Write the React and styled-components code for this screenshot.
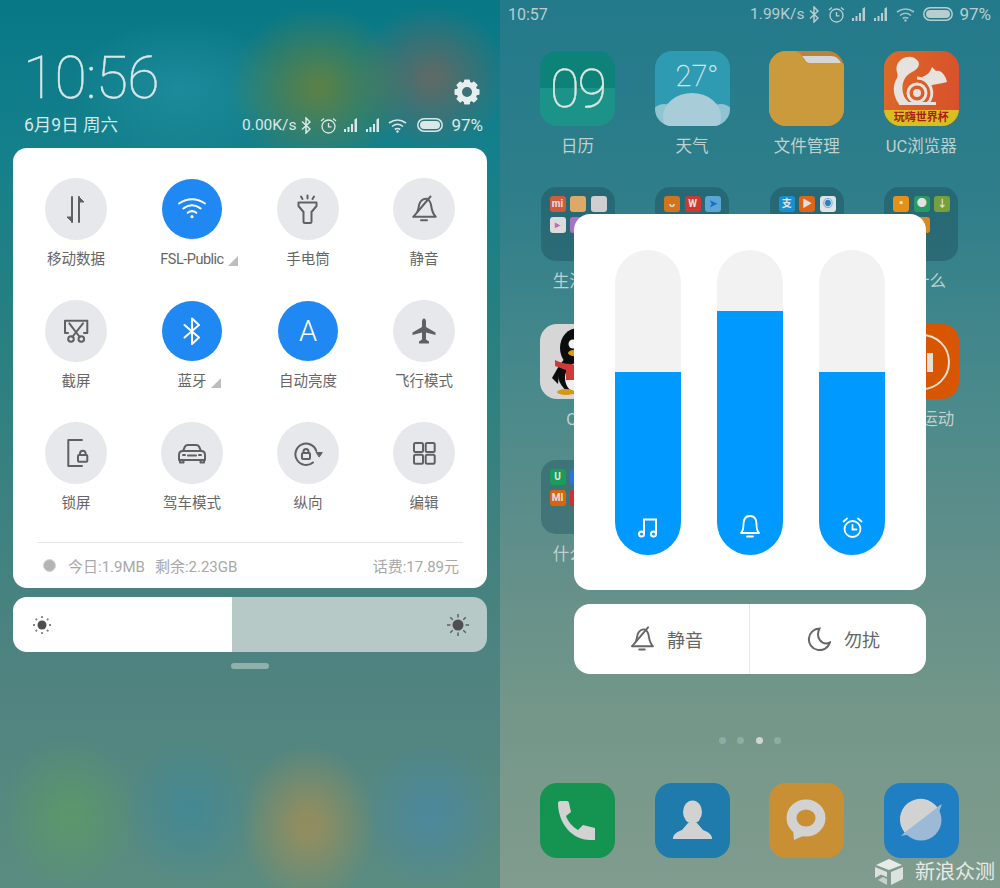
import React from "react";
import styled, { createGlobalStyle } from "styled-components";

const Global = createGlobalStyle`
  html, body { margin: 0; padding: 0; }
  body { font-family: Roboto, "Noto Sans CJK SC", sans-serif; }
`;

const Page = styled.div`
  width: 1000px;
  height: 888px;
  display: flex;
  overflow: hidden;
`;

/* left phone: control centre */
const ControlScreen = styled.div`
  width: 500px;
  height: 888px;
  padding: 0 13px;
  box-sizing: border-box;
  background:
    radial-gradient(ellipse 90px 80px at 318px 88px, rgba(115, 130, 50, 0.72) 10%, rgba(115, 130, 50, 0)),
    radial-gradient(ellipse 78px 72px at 432px 78px, rgba(120, 100, 90, 0.72) 10%, rgba(120, 100, 90, 0)),
    radial-gradient(ellipse 110px 70px at 180px 90px, rgba(40, 150, 170, 0.55), rgba(40, 150, 170, 0)),
    radial-gradient(ellipse 70px 78px at 70px 815px, rgba(95, 165, 85, 0.45) 15%, rgba(95, 165, 85, 0)),
    radial-gradient(ellipse 68px 78px at 190px 812px, rgba(50, 135, 165, 0.45) 15%, rgba(50, 135, 165, 0)),
    radial-gradient(ellipse 68px 80px at 308px 825px, rgba(190, 145, 70, 0.55) 15%, rgba(190, 145, 70, 0)),
    radial-gradient(ellipse 68px 78px at 430px 815px, rgba(65, 135, 180, 0.48) 15%, rgba(65, 135, 180, 0)),
    linear-gradient(180deg, #087886 0, #14808c 150px, #26807f 320px, #4f8380 670px, #5b8c80 888px);
`;

const Header = styled.header`
  height: 148px;
  box-sizing: border-box;
  padding: 0 4px 12px 11px;
  display: flex;
  flex-direction: column;
  justify-content: flex-end;
  color: #d8e8e8;
`;

const HeaderTop = styled.div`
  display: flex;
  justify-content: space-between;
  align-items: flex-end;
`;

const HeaderBottom = styled.div`
  display: flex;
  justify-content: space-between;
  align-items: center;
  margin-top: 6px;
`;

const Clock = styled.div`
  font-size: 59px;
  line-height: 60px;
  font-weight: 100;
  letter-spacing: -0.8px;
  margin-left: -1px;
  -webkit-text-stroke: 0.45px #d8e8e8;
`;

const DateText = styled.div`
  font-size: 17.5px;
  line-height: 22px;
`;

const Gear = styled.svg`
  display: block;
  width: 26px;
  height: 26px;
  margin: 0 3px 3px 0;
`;

const Status = styled.div`
  display: flex;
  align-items: center;
  gap: 7px;
  font-size: 15.5px;
  line-height: 20px;
  color: ${(p) => p.$color};
`;

const Percent = styled.span`
  font-size: 17px;
  margin-left: ${(p) => p.$ml}px;
`;

const StatusGlyph = styled.svg`
  display: block;
  flex: none;
  margin-left: ${(p) => p.$ml || 0}px;
`;

const Card = styled.section`
  height: 440px;
  box-sizing: border-box;
  padding-top: 30px;
  background: #fff;
  border-radius: 14px;
`;

const Tiles = styled.div`
  display: grid;
  grid-template-columns: repeat(4, 116px);
  grid-template-rows: 122px 122px 120px;
  padding: 0 5px;
`;

const Tile = styled.div`
  display: flex;
  flex-direction: column;
  align-items: center;
`;

const Disc = styled.div`
  width: ${(p) => (p.$on ? 60 : 62)}px;
  height: ${(p) => (p.$on ? 60 : 62)}px;
  margin: ${(p) => (p.$on ? 1 : 0)}px 0;
  border-radius: 50%;
  display: flex;
  align-items: center;
  justify-content: center;
  background: ${(p) => (p.$on ? "#1f88f2" : "#e7e8ec")};
  color: ${(p) => (p.$on ? "#fff" : "#5f6064")};
  font-size: 29px;
  font-weight: 300;
`;

const TileLabel = styled.div`
  position: relative;
  margin-top: 10.5px;
  font-size: 14.5px;
  line-height: 18px;
  color: #666;
  white-space: nowrap;
`;

const TileName = styled.span`
  font-size: 14.5px;
  letter-spacing: ${(p) => (p.$latin ? "-0.5px" : "0")};
`;

const Corner = styled.i`
  position: absolute;
  left: 100%;
  bottom: 3px;
  margin-left: 4px;
  width: 0;
  height: 0;
  border-left: 10px solid transparent;
  border-bottom: 10px solid #bdbdbd;
`;

const Footer = styled.footer`
  height: 46px;
  margin: 0 24px;
  padding: 0 4px 0 6px;
  border-top: 1px solid #e8e8e8;
  box-sizing: border-box;
  display: flex;
  align-items: center;
  font-size: 15px;
  color: #a8a8a8;
`;

const Meter = styled.span`
  width: 13px;
  height: 13px;
  border-radius: 50%;
  margin-right: 12px;
  background: #b4b4b4;
  border: 1px solid #d4d4d4;
  box-sizing: border-box;
`;

const FooterItem = styled.span`
  margin-right: 10px;
`;

const FooterEnd = styled.span`
  margin-left: auto;
`;

const Brightness = styled.div`
  height: 55px;
  margin-top: 9px;
  padding: 0 17px 0 19px;
  box-sizing: border-box;
  border-radius: 14px;
  display: flex;
  align-items: center;
  justify-content: space-between;
  background: linear-gradient(90deg, #fff ${(p) => p.$level}px, #b6c9c6 ${(p) => p.$level}px);
`;

const Handle = styled.div`
  width: 38px;
  height: 6px;
  margin: 11px auto 0;
  border-radius: 3px;
  background: #8fb0ab;
`;

/* right phone: home screen with volume panel */
const HomeScreen = styled.div`
  position: relative;
  width: 500px;
  height: 888px;
  box-sizing: border-box;
  padding-bottom: 30px;
  display: flex;
  flex-direction: column;
  background: linear-gradient(180deg, #237a8a 0, #2f7e8a 200px, #4a8a8b 400px, #628f8a 560px, #749789 720px, #809c8e 888px);
`;

const TopBar = styled.div`
  height: 28px;
  padding: 0 9px 0 8px;
  display: flex;
  align-items: center;
  justify-content: space-between;
  color: #b9cdd0;
  font-size: 16px;
`;

const AppGrid = styled.div`
  display: grid;
  grid-template-columns: repeat(4, 75px);
  grid-auto-rows: 136.4px;
  column-gap: 39.6px;
  padding: 23px 0 0 40px;
`;

const AppCell = styled.div`
  display: flex;
  flex-direction: column;
  align-items: center;
`;

const AppLabel = styled.div`
  margin-top: 10px;
  font-size: 16.5px;
  line-height: 22px;
  color: #bfd0ce;
  white-space: nowrap;
`;

const AppIcon = styled.div`
  position: relative;
  flex: none;
  width: 75px;
  height: 75px;
  border-radius: 17px;
  overflow: hidden;
  background: ${(p) => p.$bg};
  display: flex;
  align-items: center;
  justify-content: center;
`;

const AppArt = styled.svg`
  display: block;
  width: 75px;
  height: 75px;
`;

const CalendarDay = styled.div`
  font-size: 54px;
  font-weight: 100;
  letter-spacing: -2px;
  color: #dde6e3;
  -webkit-text-stroke: 0.5px #dde6e3;
`;

const WeatherBody = styled.div`
  position: absolute;
  top: 5px;
  left: 21px;
  font-size: 29px;
  line-height: 40px;
  font-weight: 100;
  color: #d7e5e8;
  -webkit-text-stroke: 0.35px #d7e5e8;
`;

const CupBand = styled.div`
  position: absolute;
  left: 0;
  right: 0;
  bottom: 0;
  height: 16px;
  background: #d6bf1f;
  color: #ad1c18;
  font-size: 11px;
  line-height: 16px;
  font-weight: 700;
  text-align: center;
  white-space: nowrap;
`;

const Folder = styled.div`
  width: 74px;
  height: 74px;
  box-sizing: border-box;
  padding: 9px;
  border-radius: 15px;
  background: rgba(28, 80, 90, ${(p) => p.$alpha});
  display: grid;
  grid-template-columns: repeat(3, 16px);
  grid-auto-rows: 16px;
  gap: 5px 4.5px;
`;

const Mini = styled.div`
  border-radius: 3px;
  background: ${(p) => p.$bg};
  color: ${(p) => p.$fg || "#e2e2e2"};
  font-size: 10px;
  line-height: 16px;
  font-weight: 700;
  text-align: center;
  overflow: hidden;
`;

const Dots = styled.div`
  margin-top: auto;
  margin-bottom: 39px;
  display: flex;
  justify-content: center;
  gap: 11.5px;
`;

const Dot = styled.span`
  width: 7px;
  height: 7px;
  border-radius: 50%;
  background: ${(p) => (p.$on ? "#cfd6d4" : "#8faba6")};
`;

const Dock = styled.div`
  display: grid;
  grid-template-columns: repeat(4, 75px);
  column-gap: 39.6px;
  padding-left: 40px;
`;

const VolumeOverlay = styled.div`
  position: absolute;
  top: 214px;
  left: 74px;
  width: 352px;
`;

const VolumePanel = styled.div`
  height: 376px;
  box-sizing: border-box;
  padding: 36px 41px;
  background: #fff;
  border-radius: 16px;
  display: flex;
  justify-content: space-between;
`;

const Track = styled.div`
  width: 66px;
  height: 305px;
  border-radius: 33px;
  overflow: hidden;
  background: #f2f2f2;
  display: flex;
  flex-direction: column;
  justify-content: flex-end;
`;

const Fill = styled.div`
  height: ${(p) => p.$level}px;
  box-sizing: border-box;
  padding-bottom: 17px;
  background: #0099ff;
  color: #fff;
  display: flex;
  flex-direction: column;
  justify-content: flex-end;
  align-items: center;
`;

const ModeBar = styled.div`
  height: 70px;
  margin-top: 14px;
  background: #fff;
  border-radius: 16px;
  display: flex;
  overflow: hidden;
`;

const ModeButton = styled.div`
  flex: 0 0 ${(p) => p.$width}px;
  box-sizing: border-box;
  padding-left: ${(p) => p.$pad}px;
  display: flex;
  align-items: center;
  gap: ${(p) => p.$gap}px;
  font-size: 18px;
  color: #666;
  & + & {
    border-left: 1px solid #e8e8e8;
  }
`;

const Watermark = styled.div`
  position: absolute;
  right: 5px;
  bottom: 2px;
  display: flex;
  align-items: center;
  gap: 12px;
  font-size: 20px;
  line-height: 28px;
  color: #e6eae8;
`;

const Glyph = ({ size = 32, w = 2, children }) => (
  <svg width={size} height={size} viewBox="0 0 32 32" fill="none" stroke="currentColor" strokeWidth={w} strokeLinecap="round" strokeLinejoin="round">
    {children}
  </svg>
);

const DataIcon = () => (
  <Glyph>
    <path d="M12 4v25M19 4v25" />
    <path d="M12 29l-5-5h5zM19 4l5 5h-5z" fill="currentColor" strokeWidth="1" />
  </Glyph>
);
const WifiIcon = () => (
  <Glyph>
    <path d="M3 10.5Q16 2 29 10.5M7.3 15.5Q16 9 24.7 15.5M11.7 19.8Q16 16.5 20.3 19.8" />
    <circle cx="16" cy="23.7" r="1.6" fill="currentColor" stroke="none" />
  </Glyph>
);
const TorchIcon = () => (
  <Glyph>
    <path d="M6.5 9.5H24.5V13L19.5 19V28.5C19.5 29.5 19 30 18 30H13C12 30 11.5 29.5 11.5 28.5V19L6.5 13Z" />
    <path d="M15.5 2.5v3M9 3.5l1.5 2.5M22 3.5l-1.5 2.5" />
  </Glyph>
);
const BellOffIcon = ({ size }) => (
  <Glyph size={size}>
    <path d="M5.5 23.7L22.5 3.5" />
    <path d="M5.5 23.7H27.7C25 21 24 18 23.3 13.5C22.8 10 21.5 7.5 20 6.5" />
    <path d="M9.5 18.5C11 15 10.5 12 12 9.5C13.5 7 16 5.5 19 5.7" />
    <path d="M13 27.2h6" />
  </Glyph>
);
const CutIcon = () => (
  <Glyph>
    <path d="M8 18H5V5.7H27.3V18H24" />
    <path d="M9.3 8.3L19.7 22M23 8.3L12.3 22" />
    <circle cx="11" cy="24" r="2.8" />
    <circle cx="21.3" cy="24" r="2.8" />
  </Glyph>
);
const BluetoothIcon = () => (
  <Glyph>
    <path d="M8.5 10L23 22.5L16 29V3.5L23 10L8.5 22.5" />
  </Glyph>
);
const PlaneIcon = () => (
  <Glyph>
    <path
      d="M16 3.5C17.2 3.5 18 5 18 7V12L27.5 17.5V20L18 17.5V24.5L21 26.5V28.5H11V26.5L14 24.5V17.5L4.5 20V17.5L14 12V7C14 5 14.8 3.5 16 3.5Z"
      fill="currentColor"
      stroke="none"
    />
  </Glyph>
);
const LockPhoneIcon = () => (
  <Glyph>
    <path d="M22 3H8.3V29H22" />
    <rect x="18" y="18" width="9.3" height="6.7" rx="1" />
    <path d="M20 18v-1.5a2.8 2.8 0 0 1 5.6 0V18" />
  </Glyph>
);
const CarIcon = () => (
  <Glyph>
    <path d="M7 14L9 9.5C9.5 8.5 10.5 8 12 8H20C21.5 8 22.5 8.5 23 9.5L25 14" />
    <path d="M3 23V18C3 15 5 14 7 14H25C27 14 29 15 29 18V23H3Z" />
    <path d="M4 23v2.5h3.5V23M24.5 23v2.5H28V23M7 18h2M23 18h2M12 18.5h8" />
  </Glyph>
);
const RotateIcon = () => (
  <Glyph>
    <path d="M21 25.5A10.7 10.7 0 1 1 24.3 14" />
    <path d="M24.5 15.5h5.8l-2.9 4.3z" fill="currentColor" strokeWidth="1" />
    <rect x="10" y="16" width="8" height="6" rx="1" />
    <path d="M11.5 16v-1.5a2.5 2.5 0 0 1 5 0V16" />
  </Glyph>
);
const EditIcon = () => (
  <Glyph>
    <rect x="6" y="6" width="9" height="9" rx="1.5" />
    <rect x="17.7" y="6" width="9" height="9" rx="1.5" />
    <rect x="6" y="17.7" width="9" height="9" rx="1.5" />
    <rect x="17.7" y="17.7" width="9" height="9" rx="1.5" />
  </Glyph>
);

const tiles = [
  { name: "移动数据", icon: <DataIcon /> },
  { name: "FSL-Public", icon: <WifiIcon />, on: true, more: true, latin: true },
  { name: "手电筒", icon: <TorchIcon /> },
  { name: "静音", icon: <BellOffIcon /> },
  { name: "截屏", icon: <CutIcon /> },
  { name: "蓝牙", icon: <BluetoothIcon />, on: true, more: true },
  { name: "自动亮度", icon: "A", on: true },
  { name: "飞行模式", icon: <PlaneIcon /> },
  { name: "锁屏", icon: <LockPhoneIcon /> },
  { name: "驾车模式", icon: <CarIcon /> },
  { name: "纵向", icon: <RotateIcon /> },
  { name: "编辑", icon: <EditIcon /> },
];

const SignalGlyph = () => (
  <StatusGlyph width="15" height="14" viewBox="0 0 15 14" fill="currentColor">
    <path d="M0 11h2v3H0zM3.5 9h2v5h-2zM7 6h2v8H7zM10.5 1.5L13 0v14h-2.5z" />
  </StatusGlyph>
);

const StatusIcons = ({ battery, batteryGap, dimWifi }) => (
  <>
    <StatusGlyph $ml={-2} width="10" height="17" viewBox="0 0 10 17" fill="none" stroke="currentColor" strokeWidth="1.5">
      <path d="M1 4.5L9 12L5 16V1L9 5L1 12.5" />
    </StatusGlyph>
    <StatusGlyph $ml={2} width="17" height="17" viewBox="0 0 17 17" fill="none" stroke="currentColor" strokeWidth="1.3">
      <circle cx="8.5" cy="9.5" r="6.5" />
      <path d="M8.5 6v3.8h3M1 4L4 1.5M16 4L13 1.5" />
    </StatusGlyph>
    <SignalGlyph />
    <SignalGlyph />
    <StatusGlyph width="19" height="15" viewBox="0 0 19 15" fill="none" stroke="currentColor" strokeWidth="1.6" opacity={dimWifi ? 0.85 : 1}>
      <path d="M1 5Q9.5 -1 18 5M4 8.5Q9.5 4 15 8.5M6.8 11.5Q9.5 9.5 12.2 11.5" />
      <circle cx="9.5" cy="13.5" r="1.2" fill="currentColor" stroke="none" />
    </StatusGlyph>
    <StatusGlyph $ml={batteryGap} width={battery} height="14" viewBox={`0 0 ${battery} 14`}>
      <rect x="0.8" y="0.8" width={battery - 1.6} height="12.4" rx="6.2" fill="none" stroke="currentColor" strokeWidth="1.5" />
      <rect x="3" y="3" width={battery - 6} height="8" rx="4" fill="currentColor" />
    </StatusGlyph>
  </>
);

const GearIcon = () => (
  <Gear viewBox="0 0 26 26" fill="#e6eeee">
    {[0, 45, 90, 135, 180, 225, 270, 315].map((a) => (
      <rect key={a} x="10" y="0.5" width="6" height="6" rx="1" transform={`rotate(${a} 13 13)`} />
    ))}
    <circle cx="13" cy="13" r="7.7" fill="none" stroke="#e6eeee" strokeWidth="5.4" />
  </Gear>
);

const SunIcon = ({ size, core, dotted }) => (
  <svg width={size} height={size} viewBox={`0 0 ${size} ${size}`} fill="#4d4f50" stroke="#4d4f50">
    <circle cx={size / 2} cy={size / 2} r={core} stroke="none" />
    {[0, 45, 90, 135, 180, 225, 270, 315].map((a) => (
      <path
        key={a}
        d={`M${size / 2} 1 v${dotted ? 2 : 3.5}`}
        strokeWidth={dotted ? 1.8 : 1.5}
        opacity={dotted ? 0.7 : 0.85}
        transform={`rotate(${a} ${size / 2} ${size / 2})`}
      />
    ))}
  </svg>
);

const FolderArt = () => (
  <AppArt viewBox="0 0 75 75">
    <path d="M33 5H62C67 5 70 8 72 12H41C38 12 37 11 36 9Z" fill="#d6d6d6" />
    <path d="M0 75V14C0 6 6 0 14 0H24C28 0 30 1 33 5L37 11C38 12 39 12 41 12H75V75Z" fill="#cb9a3c" />
  </AppArt>
);

const WeatherArt = () => (
  <AppArt viewBox="0 0 75 75">
    <circle cx="9" cy="66" r="13" fill="#8fc4d2" />
    <circle cx="66" cy="66" r="13" fill="#8fc4d2" />
    <ellipse cx="37" cy="66" rx="29" ry="24" fill="#a9cdd8" />
  </AppArt>
);

const SquirrelArt = () => (
  <AppArt viewBox="0 0 75 75" fill="#e6e2de">
    <path d="M13 14C16 6 28 2 34 10C37 15 32 19 28 21C20 25 17 33 19 42C20 47 23 50 27 53H15C9 45 8 35 13 27C15 23 11 20 13 14Z" />
    <path d="M38 26C43 24 46 22 48 16L52 20C57 18 62 25 63 31C56 33 50 33 46 35C44 31 41 28 38 26Z" />
    <circle cx="33" cy="42" r="4" />
    <circle cx="33" cy="42" r="9" fill="none" stroke="#e6e2de" strokeWidth="3" />
    <path d="M33 27A15 15 0 0 1 43 53" fill="none" stroke="#e6e2de" strokeWidth="3" />
    <path d="M15 51H52V54H15Z" />
  </AppArt>
);

const PenguinArt = () => (
  <AppArt viewBox="0 0 75 75">
    <ellipse cx="38" cy="50" rx="20" ry="20" fill="#0c0c0c" />
    <ellipse cx="38" cy="24" rx="18" ry="20" fill="#0c0c0c" />
    <path d="M12 54L20 40L18 60Z" fill="#0c0c0c" />
    <ellipse cx="40" cy="54" rx="15" ry="16" fill="#efefef" />
    <path d="M15 36C26 42 48 42 60 36L60 44L36 46L36 56L26 56L26 46L15 42Z" fill="#cc3b38" />
    <circle cx="33" cy="20" r="4.5" fill="#f2f2f2" />
    <ellipse cx="37" cy="29" rx="9" ry="3.5" fill="#e29a16" />
    <ellipse cx="26" cy="68" rx="9" ry="3" fill="#d9960f" />
  </AppArt>
);

const SportArt = () => (
  <AppArt viewBox="0 0 75 75" fill="none">
    <circle cx="38" cy="38" r="27" stroke="#eadfd6" strokeWidth="2" />
    <path d="M46 29v19" stroke="#eadfd6" strokeWidth="6" />
  </AppArt>
);

const HandsetArt = () => (
  <AppArt viewBox="0 0 75 75">
    <path d="M18 20C18 18 20 18 22 18H27C28 18 29 19 29 20L31 29L26 33C28 39 33 44 38 47L43 42L55 45V57H50C32 57 18 40 18 20Z" fill="#d2d2d2" />
  </AppArt>
);

const ContactArt = () => (
  <AppArt viewBox="0 0 75 75" fill="#d2d2d2">
    <ellipse cx="37.5" cy="29" rx="9.5" ry="11.5" />
    <path d="M18 56C18 52 20 50 27 47L33 40H42L48 47C55 50 57 52 57 56Z" />
  </AppArt>
);

const BubbleArt = () => (
  <AppArt viewBox="0 0 75 75" fill="#d2d2d2">
    <ellipse cx="37" cy="35" rx="14.5" ry="13.5" fill="none" stroke="#d2d2d2" strokeWidth="10" />
    <path d="M24 46L25 57L36 52Z" />
  </AppArt>
);

const PlanetArt = () => (
  <AppArt viewBox="0 0 75 75">
    <path d="M53 24L58 21L55 29ZM21 49L17 53L27 51Z" fill="#9cbad6" />
    <circle cx="37" cy="37" r="20.5" fill="#9cbad6" />
    <path d="M53.3 24.6A20.5 20.5 0 1 0 20.7 49.4Z" fill="#d2d2d2" />
  </AppArt>
);

const MusicIcon = () => (
  <svg width="20" height="20" viewBox="0 0 20 20" fill="none" stroke="currentColor" strokeWidth="2">
    <circle cx="3.5" cy="16" r="2.5" />
    <circle cx="15.5" cy="16" r="2.5" />
    <path d="M6 16V1.5H18V16" />
  </svg>
);
const BellIcon = () => (
  <svg width="20" height="23" viewBox="0 0 20 23" fill="none" stroke="currentColor" strokeWidth="1.8" strokeLinejoin="round" strokeLinecap="round">
    <path d="M1 18C3 16 3.5 14 3.5 9C3.5 4 6 1 10 1C14 1 16.5 4 16.5 9C16.5 14 17 16 19 18Z" />
    <path d="M7 21.5h6" />
  </svg>
);
const AlarmIcon = () => (
  <svg width="21" height="21" viewBox="0 0 21 21" fill="none" stroke="currentColor" strokeWidth="1.8" strokeLinecap="round">
    <circle cx="10.5" cy="12" r="8" />
    <path d="M10.5 8v4.5h4M1.5 4.5L5 1.5M19.5 4.5L16 1.5" />
  </svg>
);
const MoonIcon = () => (
  <svg width="24" height="24" viewBox="0 0 24 24" fill="none" stroke="#666" strokeWidth="2">
    <path d="M12.5 1.5A10.8 10.8 0 1 0 23 15.5C15 19 8 11 12.5 1.5Z" />
  </svg>
);

const Cube = () => (
  <svg width="28" height="27" viewBox="0 0 28 27" fill="#e6eae8">
    <path d="M14 0L27 6L14 11L1 6Z" />
    <path d="M0 8L12 13V18L6 15.5L0 19Z" opacity="0.9" />
    <path d="M28 8L16 13V26L28 20Z" opacity="0.9" />
    <path d="M3 21L8 18L12 20V26Z" opacity="0.7" />
  </svg>
);

const folderA = [
  ["#cf5a3c", "mi"],
  ["#dcaa66", ""],
  ["#cfcfcf", ""],
  ["#dcdcdc", "▸", "#c46ab0"],
  ["#a675c6", ""],
];
const folderB = [
  ["#d0741f", "ᴗ"],
  ["#c93a33", "W"],
  ["#5aa7d6", "➤", "#1c6fc7"],
];
const folderC = [
  ["#1a8fcf", "支"],
  ["#dd6418", "▶"],
  ["#dfe3e6", "◉", "#2c7fc4"],
];
const folderD = [
  ["#e2921a", "▪"],
  ["#2a9a62", "●"],
  ["#76a03c", "↓"],
  ["#3d8a8a", ""],
  ["#d78a24", ""],
];
const folderE = [
  ["#1a9c5a", "U"],
  ["#2a78d6", ""],
  ["#4a8a90", ""],
  ["#d8640f", "MI"],
  ["#d92c2c", ""],
];

const MiniGrid = ({ items, alpha = 0.45 }) => (
  <Folder $alpha={alpha}>
    {items.map(([bg, text, fg], i) => (
      <Mini key={i} $bg={bg} $fg={fg}>
        {text}
      </Mini>
    ))}
  </Folder>
);

const apps = [
  { name: "日历", icon: <AppIcon $bg="linear-gradient(180deg, #0d8278 50%, #1b9388 50%)"><CalendarDay>09</CalendarDay></AppIcon> },
  { name: "天气", icon: <AppIcon $bg="#2e9bb3"><WeatherArt /><WeatherBody>27°</WeatherBody></AppIcon> },
  { name: "文件管理", icon: <AppIcon $bg="#bd8238"><FolderArt /></AppIcon> },
  { name: "UC浏览器", icon: <AppIcon $bg="linear-gradient(100deg, #dc6a28, #d84f2b)"><SquirrelArt /><CupBand>玩嗨世界杯</CupBand></AppIcon> },
  { name: "生活类", icon: <MiniGrid items={folderA} /> },
  { name: "工具", icon: <MiniGrid items={folderB} /> },
  { name: "支付", icon: <MiniGrid items={folderC} /> },
  { name: "用什么", icon: <MiniGrid items={folderD} /> },
  { name: "QQ", icon: <AppIcon $bg="#d6d6d6"><PenguinArt /></AppIcon> },
  { name: "微信", icon: <AppIcon $bg="#2a9a62" /> },
  { name: "微博", icon: <AppIcon $bg="#d8640f" /> },
  { name: "小米运动", icon: <AppIcon $bg="#d85600"><SportArt /></AppIcon> },
  { name: "什么值", icon: <MiniGrid items={folderE} alpha={0.4} /> },
];

const dock = [
  { bg: "#149450", art: <HandsetArt /> },
  { bg: "#207bad", art: <ContactArt /> },
  { bg: "#c98f35", art: <BubbleArt /> },
  { bg: "#1f7fc2", art: <PlanetArt /> },
];

export default function App() {
  return (
    <Page>
      <Global />
      <ControlScreen>
        <Header>
          <HeaderTop>
            <Clock>10:56</Clock>
            <GearIcon />
          </HeaderTop>
          <HeaderBottom>
            <DateText>6月9日 周六</DateText>
            <Status $color="#dbe8e8">
              <span>0.00K/s</span>
              <StatusIcons battery={26} batteryGap={3} />
              <Percent $ml={1}>97%</Percent>
            </Status>
          </HeaderBottom>
        </Header>
        <Card>
          <Tiles>
            {tiles.map((t) => (
              <Tile key={t.name}>
                <Disc $on={t.on}>{t.icon}</Disc>
                <TileLabel>
                  <TileName $latin={t.latin}>{t.name}</TileName>
                  {t.more && <Corner />}
                </TileLabel>
              </Tile>
            ))}
          </Tiles>
          <Footer>
            <Meter />
            <FooterItem>今日:1.9MB</FooterItem>
            <FooterItem>剩余:2.23GB</FooterItem>
            <FooterEnd>话费:17.89元</FooterEnd>
          </Footer>
        </Card>
        <Brightness $level={219}>
          <SunIcon size={20} core={4.5} dotted />
          <SunIcon size={24} core={5.5} />
        </Brightness>
        <Handle />
      </ControlScreen>

      <HomeScreen>
        <TopBar>
          <span>10:57</span>
          <Status $color="#b9cdd0">
            <span>1.99K/s</span>
            <StatusIcons battery={30} batteryGap={1} dimWifi />
            <Percent $ml={-1}>97%</Percent>
          </Status>
        </TopBar>
        <AppGrid>
          {apps.map((a) => (
            <AppCell key={a.name}>
              {a.icon}
              <AppLabel>{a.name}</AppLabel>
            </AppCell>
          ))}
        </AppGrid>
        <Dots>
          <Dot />
          <Dot />
          <Dot $on />
          <Dot />
        </Dots>
        <Dock>
          {dock.map((d) => (
            <AppIcon key={d.bg} $bg={d.bg}>
              {d.art}
            </AppIcon>
          ))}
        </Dock>

        <VolumeOverlay>
          <VolumePanel>
            <Track>
              <Fill $level={183}>
                <MusicIcon />
              </Fill>
            </Track>
            <Track>
              <Fill $level={244}>
                <BellIcon />
              </Fill>
            </Track>
            <Track>
              <Fill $level={183}>
                <AlarmIcon />
              </Fill>
            </Track>
          </VolumePanel>
          <ModeBar>
            <ModeButton $width={175} $pad={53} $gap={10}>
              <BellOffIcon size={30} />
              静音
            </ModeButton>
            <ModeButton $width={177} $pad={57} $gap={13}>
              <MoonIcon />
              勿扰
            </ModeButton>
          </ModeBar>
        </VolumeOverlay>

        <Watermark>
          <Cube />
          <span>新浪众测</span>
        </Watermark>
      </HomeScreen>
    </Page>
  );
}
